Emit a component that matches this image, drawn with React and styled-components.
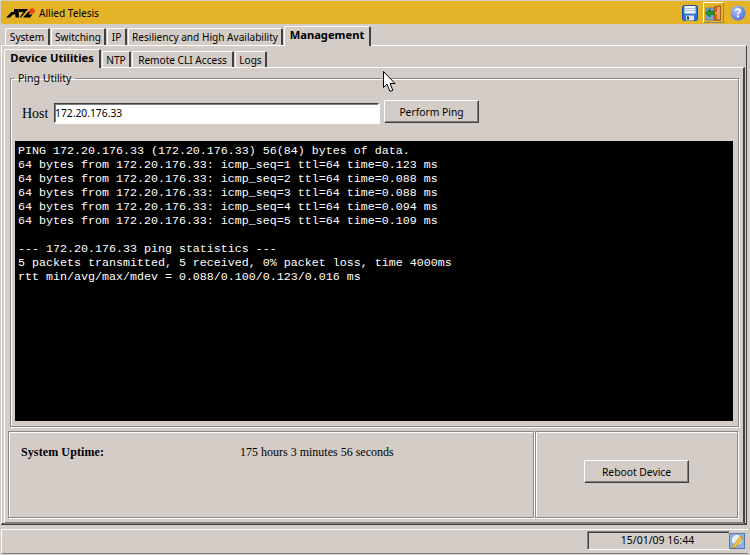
import React from 'react'
import styled, { createGlobalStyle } from 'styled-components'

const Global = createGlobalStyle`
  html, body {
    margin: 0;
    padding: 0;
    width: 750px;
    height: 555px;
    overflow: hidden;
    background: #d4ccc6;
  }
`

const Window = styled.div`
  position: relative;
  width: 750px;
  height: 555px;
  padding: 1px 0 0 1px;
  box-sizing: border-box;
  display: flex;
  flex-direction: column;
  background: #d4ccc6;
  color: #000;
  font-family: 'Noto Sans', 'Liberation Sans', Arial, sans-serif;
  font-size: 10.5px;
`

const TitleBar = styled.div`
  height: 23px;
  background: #e5b327;
  display: flex;
  align-items: center;
  padding: 0 2px 0 5px;
  flex-shrink: 0;
`

const Brand = styled.span`
  font-size: 10.1px;
  margin-left: 3px;
`

const TitleIcons = styled.div`
  margin-left: auto;
  display: flex;
  align-items: center;
  gap: 3px;
`

const IconButton = styled.span`
  display: flex;
  align-items: center;
  justify-content: center;
  width: 21px;
  height: 21px;
  box-sizing: border-box;
  border: ${p => (p.$active ? '1px solid' : 'none')};
  border-color: #fff #8a8a8a #8a8a8a #fff;
`

const TabRow = styled.div`
  display: flex;
  align-items: flex-end;
  height: ${p => p.$height}px;
  padding-left: ${p => p.$inset}px;
  gap: 1px;
  flex-shrink: 0;
  position: relative;
  z-index: 1;
`

const Tab = styled.div`
  box-sizing: border-box;
  width: ${p => p.$w}px;
  height: ${p => (p.$selected ? p.$tall : p.$tall - 3)}px;
  margin-bottom: ${p => (p.$selected ? -1 : 0)}px;
  border-top: 1px solid #fff;
  border-left: 1px solid #fff;
  border-right: 2px solid #404040;
  border-top-left-radius: 2px;
  border-top-right-radius: 2px;
  background: #d4ccc6;
  text-align: center;
  line-height: ${p => (p.$selected ? 15 : 16)}px;
  font-size: ${p => (p.$selected ? 11.2 : 10.1)}px;
  font-weight: ${p => (p.$selected ? 700 : 400)};
  white-space: nowrap;
`

const MainPanel = styled.div`
  box-sizing: border-box;
  width: 746px;
  height: 480px;
  border-top: 1px solid #fff;
  border-left: 1px solid #fff;
  border-right: 1px solid #404040;
  border-bottom: 2px solid #404040;
  padding: 3px 0 0 2px;
  display: flex;
  flex-direction: column;
  flex-shrink: 0;
`

const SubPanel = styled.div`
  box-sizing: border-box;
  width: 741px;
  height: 457px;
  border-top: 1px solid #fff;
  border-left: 1px solid #fff;
  border-right: 2px solid #404040;
  border-bottom: 2px solid #808080;
  padding: 4px 0 0 5px;
  display: flex;
  flex-direction: column;
  flex-shrink: 0;
`

const GroupBox = styled.fieldset`
  box-sizing: border-box;
  margin: 0;
  width: 729px;
  height: 355px;
  border: 1px solid #8c8883;
  box-shadow: 1px 1px 0 #fff, inset 1px 1px 0 #fff;
  padding: 0 4px;
  display: flex;
  flex-direction: column;
  legend {
    margin-left: -1px;
    padding: 0 4px;
    line-height: 13px;
  }
`

const HostRow = styled.div`
  display: flex;
  align-items: flex-end;
  height: 35px;
  margin-top: 3px;
  padding-left: 7px;
`

const HostLabel = styled.label`
  font-family: 'Liberation Serif', 'Times New Roman', serif;
  font-size: 14px;
  width: 32px;
  line-height: 18px;
`

const HostInput = styled.input`
  box-sizing: border-box;
  width: 325px;
  height: 20px;
  padding: 0 1px 0 0;
  border: 1px solid;
  border-color: #404040 #fff #fff #404040;
  box-shadow: inset 1px 1px 0 #808080, 1px 1px 0 #fff;
  background: #fff;
  font-family: 'Noto Sans', 'Liberation Sans', Arial, sans-serif;
  font-size: 10.3px;
  outline: none;
`

const ActionButton = styled.button`
  box-sizing: border-box;
  width: ${p => p.$w}px;
  height: 23px;
  margin-left: ${p => p.$left || 0}px;
  padding: 0;
  background: #d4ccc6;
  border: 1px solid;
  border-color: #fff #404040 #404040 #fff;
  box-shadow: inset -1px -1px 0 #808080;
  font-family: 'Noto Sans', 'Liberation Sans', Arial, sans-serif;
  font-size: 10.3px;
  color: #000;
`

const Terminal = styled.pre`
  box-sizing: border-box;
  margin: 18px 0 0 0;
  width: 718px;
  height: 280px;
  padding: 3px 3px;
  background: #000;
  color: #fff;
  font-family: 'Liberation Mono', 'Courier New', monospace;
  font-size: 11.67px;
  line-height: 14px;
`

const BottomRow = styled.div`
  display: flex;
  gap: 1px;
  margin: 4px 0 0 -2px;
`

const InfoBox = styled.div`
  box-sizing: border-box;
  width: ${p => p.$w}px;
  height: 87px;
  border: 1px solid #8c8883;
  box-shadow: inset 1px 1px 0 #fff, 1px 1px 0 #fff;
  display: flex;
  align-items: ${p => (p.$center ? 'center' : 'flex-start')};
  justify-content: ${p => (p.$center ? 'center' : 'flex-start')};
  padding: ${p => (p.$center ? '0 0 6px 0' : '13px 0 0 12px')};
  font-family: 'Liberation Serif', 'Times New Roman', serif;
  font-size: 12px;
  line-height: 14px;
`

const UptimeLabel = styled.b`
  width: 219px;
  letter-spacing: 0.1px;
`

const StatusBar = styled.div`
  box-sizing: border-box;
  height: 25px;
  margin-top: 4px;
  width: 747px;
  border-top: 1px solid #fff;
  border-left: 1px solid #fff;
  border-bottom: 1px solid #808080;
  display: flex;
  justify-content: flex-end;
  align-items: flex-start;
  padding-right: 3px;
  flex-shrink: 0;
`

const Clock = styled.div`
  box-sizing: border-box;
  width: 143px;
  height: 19px;
  margin-top: 1px;
  border: 1px solid;
  border-color: #808080 #fff #fff #808080;
  box-shadow: inset 1px 1px 0 #404040;
  text-align: center;
  line-height: 17px;
  padding-right: 2px;
`

const StatusIcon = styled.svg`
  margin: 3px 0 0 -1px;
  position: relative;
`

const Pointer = styled.svg`
  position: absolute;
  left: 383px;
  top: 71px;
`

const Logo = () => (
  <svg width="30" height="10" viewBox="0 0 30 10">
    <path d="M0 9.5 L5.5 4 H8 L8 1 H12.5 L13 9.5 H9.6 L9.4 6.5 H7 L4 9.5 Z" fill="#000" />
    <path d="M12.5 1 H22 L15 9.5 H13.6 L17.5 4 H13 Z" fill="#000" />
    <path d="M17 9.5 L22.5 3.5 H25 L22.5 6.5 H26.5 L24 9.5 Z" fill="#000" />
    <circle cx="26" cy="3" r="2.8" fill="#e8401c" />
  </svg>
)

const SaveIcon = () => (
  <svg width="16" height="16" viewBox="0 0 16 16">
    <rect x="0.5" y="0.5" width="15" height="15" rx="2" fill="#2c74d8" stroke="#1b4fa3" />
    <rect x="2.5" y="1" width="11" height="7.5" fill="#f4f6fb" />
    <path d="M3 3.5h10M3 5.5h10" stroke="#a9bfe0" />
    <rect x="4" y="10.5" width="8" height="5" fill="#dfe3ea" />
    <rect x="5" y="11.5" width="2" height="3" fill="#334" />
  </svg>
)

const ExitIcon = () => (
  <svg width="17" height="16" viewBox="0 0 17 16">
    <rect x="1" y="3" width="10" height="12" fill="#7fa7d6" stroke="#47688f" strokeWidth="0.6" />
    <path d="M9 2 L15.5 0.5 V15.5 L9 15 Z" fill="#c8691e" stroke="#7d3f10" strokeWidth="0.6" />
    <path d="M12 2.5 L15 1.5 V14.5 L12 14 Z" fill="#e9a060" />
    <rect x="10.4" y="7.5" width="1.4" height="1.4" fill="#ffe46a" />
    <path d="M0.5 8 L5 3.8 V6.2 H9 V9.8 H5 V12.2 Z" fill="#1e9a2e" stroke="#0c5c14" strokeWidth="0.6" />
  </svg>
)

const HelpIcon = () => (
  <svg width="16" height="16" viewBox="0 0 16 16">
    <defs>
      <radialGradient id="helpBall" cx="0.35" cy="0.3" r="0.8">
        <stop offset="0" stopColor="#b4c5f5" />
        <stop offset="1" stopColor="#4a68d4" />
      </radialGradient>
    </defs>
    <circle cx="8" cy="8" r="7.5" fill="url(#helpBall)" />
    <path d="M5.8 5.6 C6 3.6 10.2 3.4 10.2 5.7 C10.2 7.4 8 7.3 8 9.2" fill="none" stroke="#fff" strokeWidth="1.8" />
    <rect x="7" y="10.4" width="2" height="2" fill="#fff" />
  </svg>
)

const tabs = [
  { label: 'System', w: 45 },
  { label: 'Switching', w: 55 },
  { label: 'IP', w: 20 },
  { label: 'Resiliency and High Availability', w: 155 },
  { label: 'Management', w: 87, selected: true },
]

const subTabs = [
  { label: 'Device Utilities', w: 97, selected: true },
  { label: 'NTP', w: 29 },
  { label: 'Remote CLI Access', w: 102 },
  { label: 'Logs', w: 32 },
]

const output = `PING 172.20.176.33 (172.20.176.33) 56(84) bytes of data.
64 bytes from 172.20.176.33: icmp_seq=1 ttl=64 time=0.123 ms
64 bytes from 172.20.176.33: icmp_seq=2 ttl=64 time=0.088 ms
64 bytes from 172.20.176.33: icmp_seq=3 ttl=64 time=0.088 ms
64 bytes from 172.20.176.33: icmp_seq=4 ttl=64 time=0.094 ms
64 bytes from 172.20.176.33: icmp_seq=5 ttl=64 time=0.109 ms

--- 172.20.176.33 ping statistics ---
5 packets transmitted, 5 received, 0% packet loss, time 4000ms
rtt min/avg/max/mdev = 0.088/0.100/0.123/0.016 ms`

const App = () => (
  <Window>
    <Global />
    <TitleBar>
      <Logo />
      <Brand>Allied Telesis</Brand>
      <TitleIcons>
        <IconButton><SaveIcon /></IconButton>
        <IconButton $active><ExitIcon /></IconButton>
        <IconButton><HelpIcon /></IconButton>
      </TitleIcons>
    </TitleBar>
    <TabRow $height={21} $inset={4}>
      {tabs.map(t => (
        <Tab key={t.label} $w={t.w} $selected={t.selected} $tall={20}>{t.label}</Tab>
      ))}
    </TabRow>
    <MainPanel>
      <TabRow $height={18} $inset={0}>
        {subTabs.map(t => (
          <Tab key={t.label} $w={t.w} $selected={t.selected} $tall={19}>{t.label}</Tab>
        ))}
      </TabRow>
      <SubPanel>
        <GroupBox>
          <legend>Ping Utility</legend>
          <HostRow>
            <HostLabel>Host</HostLabel>
            <HostInput defaultValue="172.20.176.33" />
            <ActionButton $w={95} $left={5}>Perform Ping</ActionButton>
          </HostRow>
          <Terminal>{output}</Terminal>
        </GroupBox>
        <BottomRow>
          <InfoBox $w={526}>
            <UptimeLabel>System Uptime:</UptimeLabel>
            <span>175 hours 3 minutes 56 seconds</span>
          </InfoBox>
          <InfoBox $w={203} $center>
            <ActionButton $w={105}>Reboot Device</ActionButton>
          </InfoBox>
        </BottomRow>
      </SubPanel>
    </MainPanel>
    <StatusBar>
      <Clock>15/01/09 16:44</Clock>
      <StatusIcon width="16" height="16" viewBox="0 0 16 16">
        <rect x="0.5" y="0.5" width="15" height="15" fill="#8fb0e0" stroke="#5a78a8" />
        <circle cx="8" cy="7" r="4.5" fill="#e8eef8" stroke="#fff" />
        <path d="M3 14 L11.5 3 L14 5 L6 15 Z" fill="#f2c230" stroke="#a57c10" strokeWidth="0.6" />
      </StatusIcon>
    </StatusBar>
    <Pointer width="14" height="22" viewBox="0 0 14 22">
      <path d="M0.5 0.5 V16.5 L4 13.2 L7 20.5 L9.8 19.3 L7 12.5 H12 Z" fill="#fff" stroke="#000" />
    </Pointer>
  </Window>
)

export default App
